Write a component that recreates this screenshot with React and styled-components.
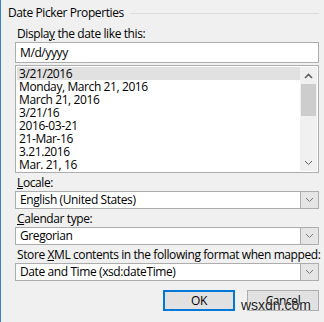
import styled, { createGlobalStyle } from "styled-components";

const GlobalStyle = createGlobalStyle`
  html, body {
    margin: 0;
    padding: 0;
    background: #f0f0f0;
  }
  body {
    font-family: "Open Sans", "Noto Sans", sans-serif;
    font-size: 12px;
    letter-spacing: -0.4px;
    color: #000;
  }
`;

const Window = styled.div`
  position: relative;
  width: 324px;
  height: 322px;
  box-sizing: border-box;
  border-left: 1px solid #3a7fd1;
  background: #f0f0f0;
  padding: 5px 5px 0 14px;
  display: flex;
  flex-direction: column;
  overflow: hidden;
`;

const GroupHeader = styled.div`
  display: flex;
  align-items: center;
  gap: 6px;
  margin-left: -7px;
  height: 16px;
  line-height: 16px;
  white-space: nowrap;
`;

const GroupLine = styled.div`
  flex: 1;
  height: 1px;
  background: #dcdcdc;
  margin-top: 1px;
`;

const Label = styled.div`
  line-height: 15px;
  margin: ${({ $top }) => $top ?? 2}px 0 1px 2px;
  white-space: nowrap;
`;

const TextBox = styled.div`
  box-sizing: border-box;
  height: 21px;
  border: 1px solid #adadad;
  background: #fff;
  padding: 0 4px;
  line-height: 19px;
`;

const ListBox = styled.div`
  box-sizing: border-box;
  margin-top: 2px;
  height: 108px;
  border: 1px solid #adadad;
  background: #fff;
  display: flex;
  padding: 1px;
`;

const Items = styled.div`
  flex: 1;
  display: flex;
  flex-direction: column;
`;

const Item = styled.div`
  height: 13px;
  line-height: 13px;
  padding-left: 2px;
  background: ${({ $selected }) => ($selected ? "#e1e1e1" : "transparent")};
  white-space: nowrap;
`;

const ScrollBar = styled.div`
  width: 17px;
  background: #f0f0f0;
  display: flex;
  flex-direction: column;
  align-items: stretch;
`;

const ScrollArrow = styled.div`
  height: 17px;
  display: flex;
  align-items: center;
  justify-content: center;
`;

const ScrollTrack = styled.div`
  flex: 1;
  display: flex;
  flex-direction: column;
`;

const Thumb = styled.div`
  height: 32px;
  margin: 0 1px;
  background: #cdcdcd;
`;

const Select = styled.div`
  box-sizing: border-box;
  height: 18px;
  border: 1px solid #adadad;
  background: #fff;
  display: flex;
  align-items: stretch;
`;

const SelectValue = styled.div`
  flex: 1;
  padding-left: 4px;
  line-height: 16px;
  white-space: nowrap;
`;

const SelectButton = styled.div`
  width: 17px;
  border-left: 1px solid #adadad;
  background: #e5e5e5;
  display: flex;
  align-items: center;
  justify-content: center;
`;

const ButtonRow = styled.div`
  display: flex;
  justify-content: flex-end;
  gap: 12px;
  margin-top: 9px;
  position: relative;
`;

const Button = styled.div`
  box-sizing: border-box;
  width: 72px;
  height: 21px;
  background: #e1e1e1;
  border: ${({ $default }) =>
    $default ? "2px solid #0078d7" : "1px solid #adadad"};
  display: flex;
  align-items: center;
  justify-content: center;
`;

const Watermark = styled.div`
  position: absolute;
  right: 8px;
  top: 9px;
  font-family: "Liberation Sans", Arial, sans-serif;
  font-size: 14px;
  letter-spacing: 0;
  line-height: 13px;
  color: #222;
  text-shadow: 0 0 2px #fff;
`;

const Chevron = ({ up, color = "#777" }) => (
  <svg width="9" height="6" viewBox="0 0 9 6">
    <path
      d={up ? "M1 5 L4.5 1.5 L8 5" : "M1 1 L4.5 4.5 L8 1"}
      fill="none"
      stroke={color}
      strokeWidth={up ? 1.6 : 1}
    />
  </svg>
);

const formats = [
  "3/21/2016",
  "Monday, March 21, 2016",
  "March 21, 2016",
  "3/21/16",
  "2016-03-21",
  "21-Mar-16",
  "3.21.2016",
  "Mar. 21, 16",
];

const Dropdown = ({ value }) => (
  <Select>
    <SelectValue>{value}</SelectValue>
    <SelectButton>
      <Chevron />
    </SelectButton>
  </Select>
);

export default function App() {
  return (
    <>
      <GlobalStyle />
      <Window>
        <GroupHeader>
          Date Picker Properties
          <GroupLine />
        </GroupHeader>

        <Label $top={5}>
          Displa<u>y</u> the date like this:
        </Label>
        <TextBox>M/d/yyyy</TextBox>

        <ListBox>
          <Items>
            {formats.map((f, i) => (
              <Item key={f} $selected={i === 0}>
                {f}
              </Item>
            ))}
          </Items>
          <ScrollBar>
            <ScrollArrow>
              <Chevron up color="#606060" />
            </ScrollArrow>
            <ScrollTrack>
              <Thumb />
            </ScrollTrack>
            <ScrollArrow>
              <Chevron color="#606060" />
            </ScrollArrow>
          </ScrollBar>
        </ListBox>

        <Label>
          <u>L</u>ocale:
        </Label>
        <Dropdown value="English (United States)" />

        <Label>
          <u>C</u>alendar type:
        </Label>
        <Dropdown value="Gregorian" />

        <Label>
          Store <u>X</u>ML contents in the following format when mapped:
        </Label>
        <Dropdown value="Date and Time (xsd:dateTime)" />

        <ButtonRow>
          <Button $default>OK</Button>
          <Button>Cancel</Button>
          <Watermark>wsxdn.com</Watermark>
        </ButtonRow>
      </Window>
    </>
  );
}
